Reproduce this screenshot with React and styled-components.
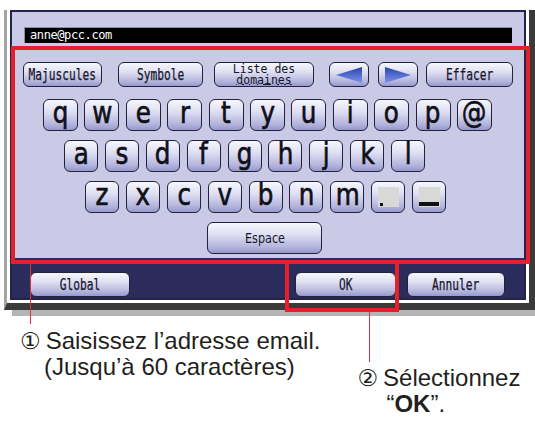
import React from 'react';
import styled, { createGlobalStyle } from 'styled-components';

const GlobalStyle = createGlobalStyle`
  html, body { margin: 0; padding: 0; background: #ffffff; }
  body { width: 535px; height: 432px; overflow: hidden; font-family: "Liberation Sans", Arial, sans-serif; }
  * { box-sizing: border-box; }
`;

const Page = styled.div`
  position: relative;
  width: 535px;
  height: 432px;
  padding: 10px 0 0 4px;
`;

const Bezel = styled.div`
  width: 531px;
  background: #ffffff;
  border-left: 3px solid #a4a4a4;
  border-right: 6px solid #3a3a3a;
  border-bottom: 7px solid #3a3a3a;
  padding: 0 3px 3px 3px;
`;

const Screen = styled.div`
  border: 2px solid #23234c;
  background: #2b2b5c;
  display: flex;
  flex-direction: column;
`;

const Shadow = styled.div`
  margin-left: 8px;
  width: 523px;
  height: 6px;
  background: #b4b4b4;
`;

const Panel = styled.div`
  background: #cacae6;
  padding: 15px 0 4px 0;
  display: flex;
  flex-direction: column;
`;

const EmailField = styled.div`
  margin: 0 12px;
  height: 16px;
  background: #000000;
  border-top: 1px solid #8e8ea2;
  border-left: 1px solid #8e8ea2;
  color: #ffffff;
  font-family: "DejaVu Sans Mono", "Liberation Mono", monospace;
  font-size: 12px;
  line-height: 15px;
  letter-spacing: -0.4px;
  padding-left: 5px;
`;

const Toolbar = styled.div`
  display: flex;
  margin-top: 19px;
  padding-left: 11px;
  height: 25px;
`;

const ButtonFace = styled.div`
  width: ${p => p.$w}px;
  height: ${p => p.$h || 25}px;
  margin-left: ${p => p.$ml || 0}px;
  flex: none;
  border: 1.5px solid #22223a;
  border-radius: 6px;
  background: linear-gradient(180deg, #f7f7fd 0%, #dedef2 40%, #b4b5dc 80%, #9798cc 100%);
  display: flex;
  align-items: center;
  justify-content: center;
`;

const MonoLabel = styled.span`
  display: inline-block;
  font-family: "DejaVu Sans Mono", "Liberation Mono", monospace;
  font-size: 16px;
  line-height: 16px;
  color: #16162a;
  white-space: nowrap;
  transform: scaleX(0.7);
  -webkit-text-stroke: 0.25px #16162a;
`;

const TwoLine = styled.span`
  display: inline-flex;
  flex-direction: column;
  align-items: center;
  font-family: "DejaVu Sans Mono", "Liberation Mono", monospace;
  font-size: 11.5px;
  line-height: 11px;
  color: #16162a;
  white-space: nowrap;
`;

const Underlined = styled.span`
  text-decoration: underline;
  text-underline-offset: 0px;
`;

const Keys = styled.div`
  display: flex;
  flex-direction: column;
  gap: 9px;
  margin-top: 12px;
`;

const KeyRow = styled.div`
  display: flex;
  gap: ${p => p.$gap}px;
  padding-left: ${p => p.$pad}px;
  height: 32px;
`;

const Key = styled(ButtonFace)`
  width: ${p => p.$w || 35}px;
  height: 32px;
  border-radius: 6px;
  border-width: 1.6px;
`;

const Glyph = styled.span`
  display: inline-block;
  font-family: "DejaVu Sans", sans-serif;
  font-size: 30px;
  line-height: 30px;
  height: 30px;
  margin-top: -4px;
  color: #101018;
  transform: scaleX(0.82);
  -webkit-text-stroke: 0.7px #101018;
`;

const Swatch = styled.span`
  width: 21px;
  height: 20px;
  background: #d8d8d6;
  display: flex;
  align-items: flex-end;
  justify-content: ${p => (p.$full ? 'stretch' : 'flex-start')};
  padding: ${p => (p.$full ? '0 0 1px 0' : '0 0 1px 2px')};
`;

const Mark = styled.span`
  display: block;
  width: ${p => p.$w}px;
  height: ${p => p.$h}px;
  background: #111111;
`;

const SpaceLabel = styled.span`
  display: inline-block;
  font-family: "DejaVu Sans", sans-serif;
  font-size: 14px;
  color: #16162a;
  transform: scaleX(0.8);
`;

const BottomBar = styled.div`
  height: 40px;
  padding-top: 14px;
  display: flex;
  background: #2b2b5c;
`;

const RedBox = styled.div`
  position: absolute;
  left: ${p => p.$x}px;
  top: ${p => p.$y}px;
  width: ${p => p.$w}px;
  height: ${p => p.$h}px;
  border: 4px solid #e6202a;
  pointer-events: none;
`;

const Leader = styled.div`
  position: absolute;
  left: ${p => p.$x}px;
  top: ${p => p.$y}px;
  width: 1px;
  height: ${p => p.$h}px;
  background: #e0303c;
`;

const Captions = styled.div`
  display: flex;
  align-items: flex-start;
  margin-top: 12px;
  padding-left: 16px;
`;

const Caption = styled.div`
  font-family: "Liberation Sans", Arial, sans-serif;
  font-size: 24px;
  line-height: 25px;
  color: #231f20;
  margin-top: ${p => p.$top || 0}px;
  margin-left: ${p => p.$left || 0}px;
  white-space: nowrap;
`;

const CaptionLine = styled.div`
  padding-left: ${p => p.$indent || 0}px;
`;

const Num = styled.span`
  font-family: "DejaVu Sans", sans-serif;
  font-size: 23px;
  margin-right: 5px;
`;

const Arrow = ({ dir }) => (
  <svg width="26" height="16" viewBox="0 0 26 16">
    <defs>
      <linearGradient id={`g${dir}`} x1="0" y1="0" x2="0" y2="1">
        <stop offset="0" stopColor="#2a44b4" />
        <stop offset="1" stopColor="#7d94e6" />
      </linearGradient>
    </defs>
    {dir === 'left' ? (
      <polygon points="0,8 26,0 26,16" fill={`url(#g${dir})`} />
    ) : (
      <polygon points="26,8 0,0 0,16" fill={`url(#g${dir})`} />
    )}
  </svg>
);

const rows = [
  { pad: 31, gap: 6.4, keys: ['q', 'w', 'e', 'r', 't', 'y', 'u', 'i', 'o', 'p', '@'] },
  { pad: 52, gap: 6.9, keys: ['a', 's', 'd', 'f', 'g', 'h', 'j', 'k', 'l'] },
  { pad: 73, gap: 6.9, keys: ['z', 'x', 'c', 'v', 'b', 'n', 'm', '.', '_'] },
];

export default function App() {
  return (
    <>
      <GlobalStyle />
      <Page>
        <Bezel>
          <Screen>
            <Panel>
              <EmailField>anne@pcc.com</EmailField>
              <Toolbar>
                <ButtonFace $w={79}><MonoLabel>Majuscules</MonoLabel></ButtonFace>
                <ButtonFace $w={85} $ml={16}><MonoLabel>Symbole</MonoLabel></ButtonFace>
                <ButtonFace $w={100} $ml={11}>
                  <TwoLine><span>Liste des</span><Underlined>domaines</Underlined></TwoLine>
                </ButtonFace>
                <ButtonFace $w={40} $ml={15}><Arrow dir="left" /></ButtonFace>
                <ButtonFace $w={40} $ml={9}><Arrow dir="right" /></ButtonFace>
                <ButtonFace $w={87} $ml={8}><MonoLabel>Effacer</MonoLabel></ButtonFace>
              </Toolbar>
              <Keys>
                {rows.map((row, i) => (
                  <KeyRow key={i} $pad={row.pad} $gap={row.gap}>
                    {row.keys.map(k => (
                      <Key key={k} $w={i === 0 ? 35 : 34}>
                        {k === '.' ? (
                          <Swatch><Mark $w={3} $h={3} /></Swatch>
                        ) : k === '_' ? (
                          <Swatch $full><Mark $w={20} $h={4} /></Swatch>
                        ) : (
                          <Glyph>{k}</Glyph>
                        )}
                      </Key>
                    ))}
                  </KeyRow>
                ))}
                <KeyRow $pad={195} $gap={0}>
                  <Key $w={115}><SpaceLabel>Espace</SpaceLabel></Key>
                </KeyRow>
              </Keys>
            </Panel>
            <BottomBar>
              <ButtonFace $w={100} $ml={18}><MonoLabel>Global</MonoLabel></ButtonFace>
              <ButtonFace $w={101} $ml={165}><MonoLabel>OK</MonoLabel></ButtonFace>
              <ButtonFace $w={98} $ml={11}><MonoLabel>Annuler</MonoLabel></ButtonFace>
            </BottomBar>
          </Screen>
        </Bezel>
        <Shadow />
        <Captions>
          <Caption>
            <CaptionLine><Num>①</Num>Saisissez l’adresse email.</CaptionLine>
            <CaptionLine $indent={24}>(Jusqu’à 60 caractères)</CaptionLine>
          </Caption>
          <Caption $top={37} $left={37}>
            <CaptionLine><Num>②</Num>Sélectionnez</CaptionLine>
            <CaptionLine $indent={29}>“<b>OK</b>”.</CaptionLine>
          </Caption>
        </Captions>
        <RedBox $x={11} $y={46} $w={519} $h={218} />
        <RedBox $x={285} $y={260} $w={114} $h={52} />
        <Leader $x={30} $y={264} $h={60} />
        <Leader $x={369} $y={312} $h={50} />
      </Page>
    </>
  );
}
